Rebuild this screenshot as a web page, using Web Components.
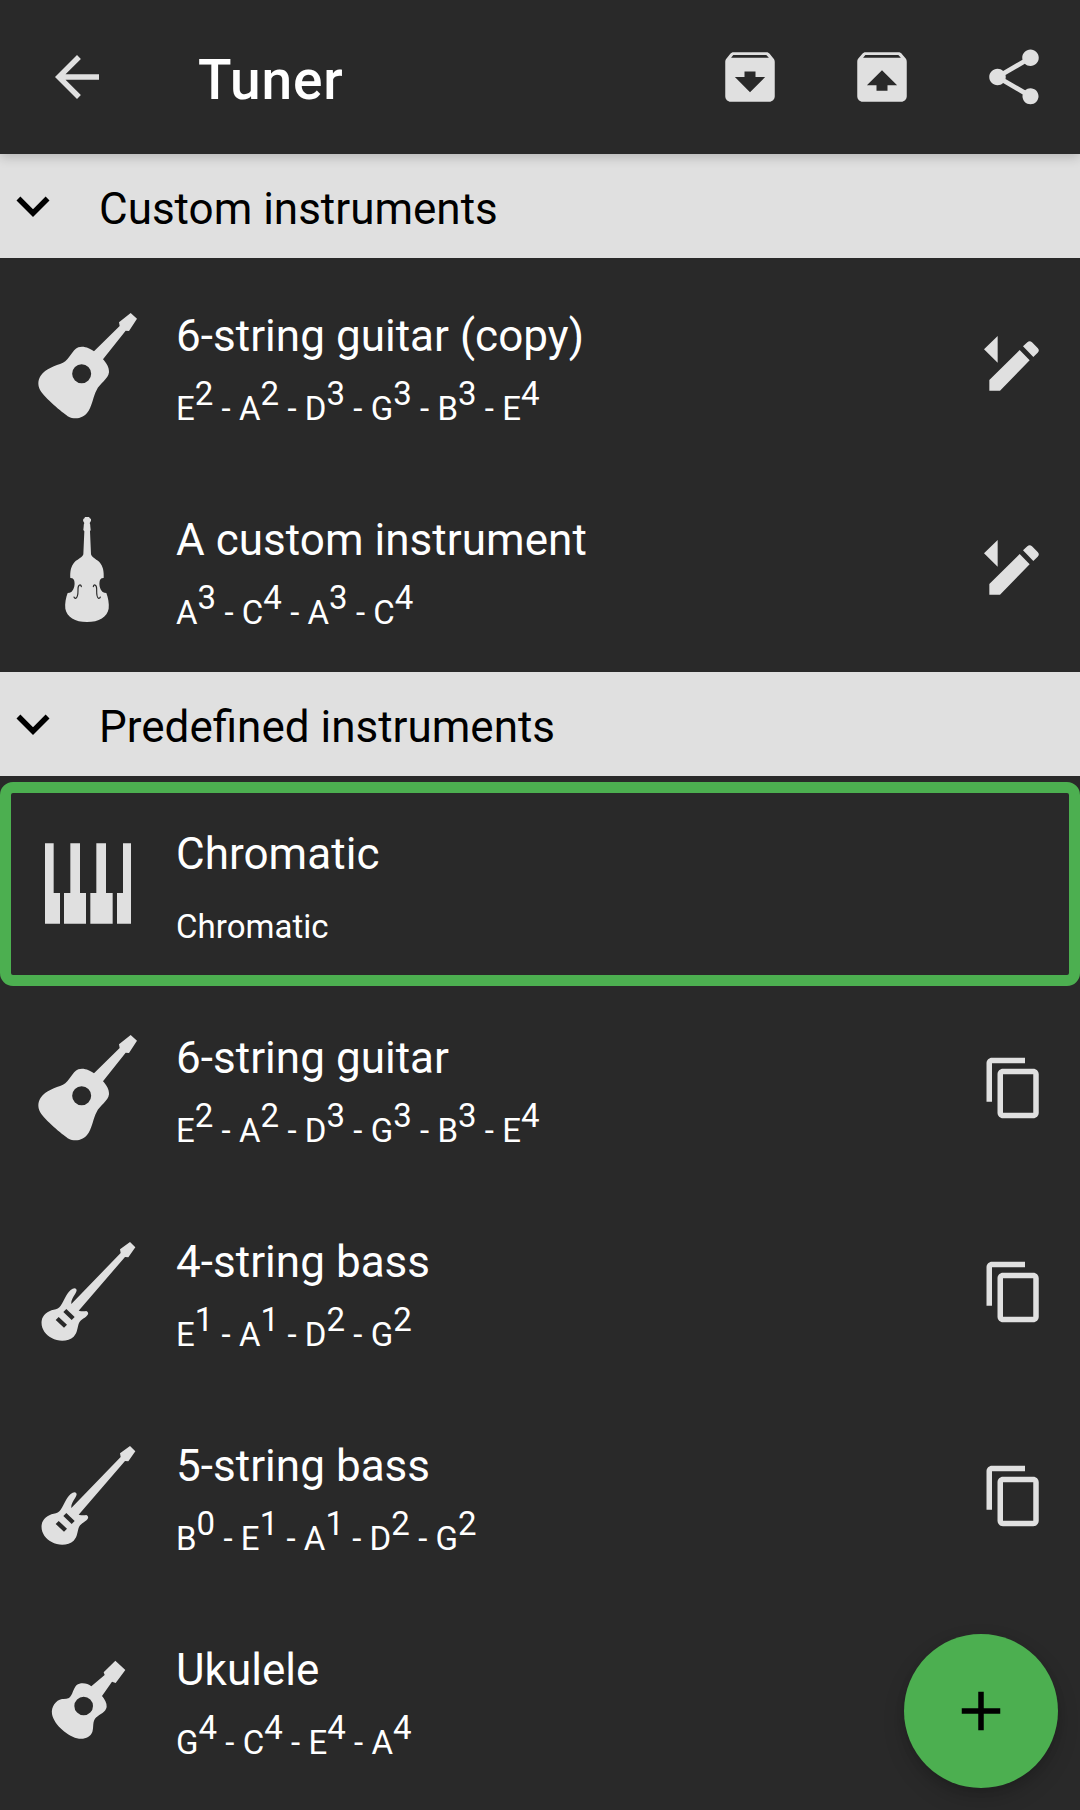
<!DOCTYPE html>
<html lang="en">
<head>
<meta charset="utf-8">
<title>Tuner</title>
<style>
html, body { margin: 0; background: #292929; }
body { width: 1080px; height: 1810px; overflow: hidden; font-family: Roboto, "Noto Sans", sans-serif; }
</style>
</head>
<body>
<tuner-app></tuner-app>
<script>
const ICONS = {
  back: ['0 0 24 24', '<path d="M20 11H7.83l5.59-5.59L12 4l-8 8 8 8 1.41-1.41L7.83 13H20z"/>'],
  archive: ['0 0 24 24', '<path fill-rule="evenodd" d="M20.54 5.23l-1.39-1.68C18.88 3.21 18.47 3 18 3H6c-.47 0-.88.21-1.16.55L3.46 5.23C3.17 5.57 3 6.02 3 6.5V19c0 1.1.9 2 2 2h14c1.1 0 2-.9 2-2V6.5c0-.48-.17-.93-.46-1.27zM12 17.5L6.5 12H10v-2h4v2h3.5L12 17.5zM5.12 5l.81-1h12l.94 1H5.12z"/>'],
  unarchive: ['0 0 24 24', '<path fill-rule="evenodd" d="M20.55 5.22l-1.39-1.68C18.88 3.21 18.47 3 18 3H6c-.47 0-.88.21-1.15.55L3.46 5.22C3.17 5.57 3 6.01 3 6.5V19c0 1.1.89 2 2 2h14c1.1 0 2-.9 2-2V6.5c0-.49-.17-.93-.45-1.28zM12 9.5l5.5 5.5H14v2h-4v-2H6.5L12 9.5zM5.12 5l.82-1h12l.93 1H5.12z"/>'],
  share: ['0 0 24 24', '<path d="M18 16.08c-.76 0-1.44.3-1.96.77L8.91 12.7c.05-.23.09-.46.09-.7s-.04-.47-.09-.7l7.05-4.11c.54.5 1.25.81 2.04.81 1.66 0 3-1.34 3-3s-1.34-3-3-3-3 1.34-3 3c0 .24.04.47.09.7L8.04 9.81C7.5 9.31 6.79 9 6 9c-1.66 0-3 1.34-3 3s1.34 3 3 3c.79 0 1.5-.31 2.04-.81l7.12 4.16c-.05.21-.08.43-.08.65 0 1.61 1.31 2.92 2.92 2.92s2.92-1.31 2.92-2.92-1.31-2.92-2.92-2.92z"/>'],
  expand: ['0 0 24 24', '<path d="M16.59 8.59L12 13.17 7.41 8.59 6 10l6 6 6-6z"/>'],
  add: ['0 0 24 24', '<path d="M19 13h-6v6h-2v-6H5v-2h6V5h2v6h6z"/>'],
  copy: ['0 0 24 24', '<path d="M16 1H4c-1.1 0-2 .9-2 2v14h2V3h12V1zm3 4H8c-1.1 0-2 .9-2 2v14c0 1.1.9 2 2 2h11c1.1 0 2-.9 2-2V7c0-1.1-.9-2-2-2zm0 16H8V7h11v14z"/>'],
  edit: ['63 69 198 198', '<path d="M113 78V158L72 118zM88 210L179 120 209 151 120 242H88zM189 109L202 97Q209 90 216 97L233 114Q240 121 233 128L220 141z"/>'],
  guitar: ['39 63 330 330', '<path fill-rule="evenodd" d="M332 69L351 86 327 123 317 122 249 208C258 218 268 232 267 247C265 267 239 281 230 300C219 321 218 342 206 362C192 385 165 390 146 380C135 374 81 330 64 306C53 290 52 272 62 257C77 234 106 228 129 218C149 209 156 180 175 172C190 166 211 175 222 184L299 108 297 97zM185 223A28.500 28.500 0 1 0 185 280A28.500 28.500 0 1 0 185 223z"/>'],
  contrabass: ['39 45 330 330', '<path d="M195 51H207Q209 55 213 57Q214 63 211 66L209 69Q211 73 211 80L212 90 210 94 213 163C215 172 228 177 238 186C250 199 252 216 251 234Q243 233 240 240C236 252 239 267 248 276Q253 279 259 279C264 292 268 311 266 326C262 350 237 366 201 366C165 366 140 350 136 326C134 311 138 292 143 279Q149 279 154 276C163 267 166 252 162 240Q159 233 151 234C150 216 152 199 164 186C174 177 188 172 190 163L193 94 190 90 191 80Q191 73 193 69L191 66Q188 63 190 57Q194 55 195 51z"/><g fill="none" stroke="#292929" stroke-width="3.500" stroke-linecap="round"><path d="M184 260Q183 254 179 255Q174 257 174 267C174 278 175 293 167 295Q163 295 162 291"/><path d="M220 260Q221 254 225 255Q230 257 230 267C230 278 229 293 236 295Q240 295 241 291"/></g>'],
  bass: ['39 51 330 330', '<path fill-rule="evenodd" d="M330 66L346 82 325 112 315 111 176 272Q188 275 199 273Q206 276 204 283C198 294 182 298 177 309C172 321 173 338 161 350C146 364 117 366 95 354C75 344 62 324 65 302C68 284 83 273 101 269Q115 267 122 257C134 239 141 214 158 206Q168 202 170 210C169 222 152 236 154 252L302 99 300 88zM139 267L130 276 155 300 164 291zM116 291L107 300 132 323 141 314z"/>'],
  ukulele: ['39 15 330 330', '<path fill-rule="evenodd" d="M286 62L316 90 287 129 276 125 246 168C254 178 261 189 260 201C257 217 240 222 229 232C216 243 222 262 217 276C211 291 196 298 177 296C146 292 101 254 96 222C93 200 107 181 126 177Q138 178 147 174C158 166 159 146 170 135C182 126 203 129 214 139L254 105 251 97zM191 170A28 28 0 1 0 191 226A28 28 0 1 0 191 170z"/>'],
  piano: ['99 207 330 330', '<path d="M135 250H161V399H180V491H135zM211 250H240V399H258V491H192V399H211zM289 250H318V399H338V491H271V399H289zM369 250H393V491H351V399H369z"/>']
};

class TunerIcon extends HTMLElement {
  connectedCallback() {
    const [box, art] = ICONS[this.getAttribute('name')];
    this.attachShadow({ mode: 'open' }).innerHTML =
      `<style>:host{display:block;flex:none;width:66px;height:66px;color:#e0e0e0}svg{display:block;width:100%;height:100%;fill:currentColor}</style><svg viewBox="${box}">${art}</svg>`;
  }
}

class TunerBar extends HTMLElement {
  connectedCallback() {
    this.attachShadow({ mode: 'open' }).innerHTML = `
    <style>
      :host{display:flex;align-items:center;box-sizing:border-box;height:154px;padding:0 33px 0 44px;background:#292929;position:relative;z-index:1;box-shadow:0 3px 11px rgba(0,0,0,.2)}
      h1{margin:0;padding:5px 0 0 88px;flex:1;font-size:55px;line-height:64px;font-weight:500;letter-spacing:.85px;color:#fff}
      nav{display:flex;gap:66px}
    </style>
    <tuner-icon name="back"></tuner-icon><h1><slot></slot></h1>
    <nav><tuner-icon name="archive"></tuner-icon><tuner-icon name="unarchive"></tuner-icon><tuner-icon name="share"></tuner-icon></nav>`;
  }
}

class InstrumentSection extends HTMLElement {
  connectedCallback() {
    this.attachShadow({ mode: 'open' }).innerHTML = `
    <style>
      :host{display:block}
      header{display:flex;align-items:center;height:104px;background:#e0e0e0;color:#000}
      header tuner-icon{color:#000}
      h2{margin:0;padding:6px 0 0 33px;font-size:44px;line-height:52px;font-weight:400}
      .rows{padding-top:6px}
    </style>
    <header><tuner-icon name="expand"></tuner-icon><h2>${this.getAttribute('label')}</h2></header>
    <div class="rows"><slot></slot></div>`;
  }
}

class InstrumentRow extends HTMLElement {
  connectedCallback() {
    const action = this.getAttribute('action');
    const strings = this.getAttribute('strings').replace(/([A-G])(\d)/g, '$1<sup>$2</sup>');
    this.attachShadow({ mode: 'open' }).innerHTML = `
    <style>
      :host{display:flex;align-items:center;box-sizing:border-box;height:204px;padding:0 33px;color:#fff}
      :host([selected]){padding:0 22px;border:11px solid #4caf50;border-radius:13px}
      .picture{width:110px;height:110px}
      .text{flex:1;margin-left:33px;height:138px;display:flex;flex-direction:column;justify-content:space-between}
      .name{font-size:44px;line-height:52px;margin-top:13px;letter-spacing:.04px}
      .strings{font-size:33px;line-height:40px;white-space:nowrap;margin-bottom:6px;letter-spacing:.04px}
      sup{font-size:inherit;line-height:0;vertical-align:15px}
    </style>
    <tuner-icon class="picture" name="${this.getAttribute('icon')}"></tuner-icon>
    <div class="text"><div class="name"><slot></slot></div><div class="strings">${strings}</div></div>
    ${action ? `<tuner-icon name="${action}"></tuner-icon>` : ''}`;
  }
}

class AddButton extends HTMLElement {
  connectedCallback() {
    this.attachShadow({ mode: 'open' }).innerHTML = `
    <style>
      :host{position:absolute;right:22px;bottom:22px;width:154px;height:154px;border-radius:50%;background:#4caf50;display:flex;align-items:center;justify-content:center;box-shadow:0 10px 22px rgba(0,0,0,.16),0 3px 8px rgba(0,0,0,.1)}
      tuner-icon{color:#000}
    </style><tuner-icon name="add"></tuner-icon>`;
  }
}

class TunerApp extends HTMLElement {
  connectedCallback() {
    this.attachShadow({ mode: 'open' }).innerHTML = `
    <style>:host{display:block;position:relative;width:1080px;height:1810px;overflow:hidden;background:#292929}</style>
    <tuner-bar>Tuner</tuner-bar>
    <instrument-section label="Custom instruments">
      <instrument-row icon="guitar" action="edit" strings="E2 - A2 - D3 - G3 - B3 - E4">6-string guitar (copy)</instrument-row>
      <instrument-row icon="contrabass" action="edit" strings="A3 - C4 - A3 - C4">A custom instrument</instrument-row>
    </instrument-section>
    <instrument-section label="Predefined instruments">
      <instrument-row selected icon="piano" strings="Chromatic">Chromatic</instrument-row>
      <instrument-row icon="guitar" action="copy" strings="E2 - A2 - D3 - G3 - B3 - E4">6-string guitar</instrument-row>
      <instrument-row icon="bass" action="copy" strings="E1 - A1 - D2 - G2">4-string bass</instrument-row>
      <instrument-row icon="bass" action="copy" strings="B0 - E1 - A1 - D2 - G2">5-string bass</instrument-row>
      <instrument-row icon="ukulele" strings="G4 - C4 - E4 - A4">Ukulele</instrument-row>
    </instrument-section>
    <add-button></add-button>`;
  }
}

customElements.define('tuner-icon', TunerIcon);
customElements.define('tuner-bar', TunerBar);
customElements.define('instrument-section', InstrumentSection);
customElements.define('instrument-row', InstrumentRow);
customElements.define('add-button', AddButton);
customElements.define('tuner-app', TunerApp);
</script>
</body>
</html>
